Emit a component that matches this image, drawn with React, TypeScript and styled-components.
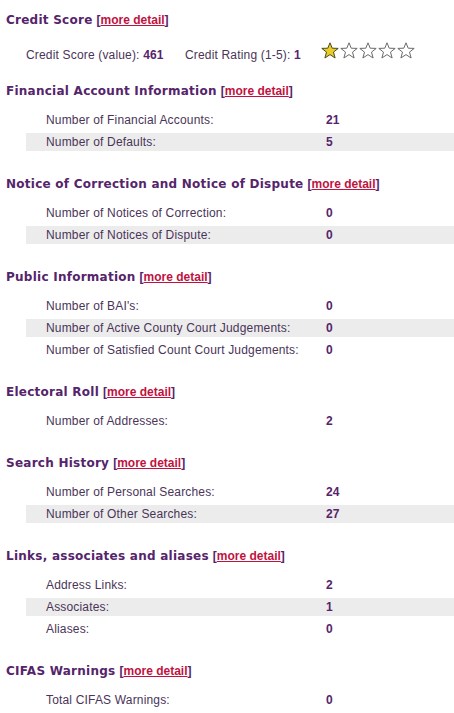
import React from "react";
import styled, { createGlobalStyle } from "styled-components";

const Global = createGlobalStyle`
  html, body { margin: 0; padding: 0; background: #ffffff; }
  body { font-family: "Liberation Sans", Arial, sans-serif; }
`;

const Page = styled.div`
  width: 454px;
  padding: 10px 0 0 0;
  box-sizing: border-box;
`;

const Section = styled.section<{ $gap?: number }>`
  display: flex;
  flex-direction: column;
  padding-bottom: ${(p) => (p.$gap ?? 23)}px;
`;

const Heading = styled.h2`
  margin: 0;
  padding-left: 6px;
  height: 20px;
  line-height: 20px;
  font-family: "DejaVu Sans", Verdana, sans-serif;
  font-size: 12px;
  font-weight: bold;
  letter-spacing: 0.25px;
  color: #55246b;
  white-space: nowrap;
`;

const More = styled.span`
  font-family: "Liberation Sans", Arial, sans-serif;
  font-size: 12px;
  font-weight: bold;
  letter-spacing: 0;
  color: #55246b;
  margin-left: 4px;
`;

const MoreLink = styled.a`
  color: #c0123f;
  text-decoration: underline;
`;

const Rows = styled.div`
  display: flex;
  flex-direction: column;
  gap: 4px;
  margin: 10px 0 0 26px;
`;

const Row = styled.div<{ $shade: boolean }>`
  display: grid;
  grid-template-columns: 300px 1fr;
  height: 18px;
  line-height: 18px;
  background: ${(p) => (p.$shade ? "#ececec" : "transparent")};
  font-size: 12px;
`;

const Label = styled.span`
  padding-left: 20px;
  color: #4a3458;
  letter-spacing: 0.17px;
  white-space: nowrap;
`;

const Value = styled.span`
  font-weight: bold;
  color: #55246b;
`;

const ScoreRow = styled.div`
  display: flex;
  align-items: flex-start;
  height: 20px;
  margin: 13px 0 0 26px;
  font-size: 12px;
`;

const ScoreItem = styled.span<{ $w: number }>`
  width: ${(p) => p.$w}px;
  padding-top: 2px;
  line-height: 20px;
  color: #4a3458;
  letter-spacing: 0.17px;
  white-space: nowrap;
`;

const Stars = styled.div`
  display: flex;
  gap: 1px;
  margin-top: -1px;
`;

const Star = ({ filled }: { filled: boolean }) => (
  <svg width="18" height="17" viewBox="0 0 18 17">
    <polygon
      points="9,0.8 11.2,6.2 17.2,6.4 12.5,10.1 14.1,16 9,12.6 3.9,16 5.5,10.1 0.8,6.4 6.8,6.2"
      fill={filled ? "#e9cc25" : "#ffffff"}
      stroke={filled ? "#4a4a20" : "#6a6a6a"}
      strokeWidth="1"
      strokeLinejoin="miter"
    />
  </svg>
);

type Item = [string, string];
const sections: { title: string; rows: Item[] }[] = [
  {
    title: "Financial Account Information",
    rows: [
      ["Number of Financial Accounts:", "21"],
      ["Number of Defaults:", "5"],
    ],
  },
  {
    title: "Notice of Correction and Notice of Dispute",
    rows: [
      ["Number of Notices of Correction:", "0"],
      ["Number of Notices of Dispute:", "0"],
    ],
  },
  {
    title: "Public Information",
    rows: [
      ["Number of BAI's:", "0"],
      ["Number of Active County Court Judgements:", "0"],
      ["Number of Satisfied Count Court Judgements:", "0"],
    ],
  },
  {
    title: "Electoral Roll",
    rows: [["Number of Addresses:", "2"]],
  },
  {
    title: "Search History",
    rows: [
      ["Number of Personal Searches:", "24"],
      ["Number of Other Searches:", "27"],
    ],
  },
  {
    title: "Links, associates and aliases",
    rows: [
      ["Address Links:", "2"],
      ["Associates:", "1"],
      ["Aliases:", "0"],
    ],
  },
  {
    title: "CIFAS Warnings",
    rows: [["Total CIFAS Warnings:", "0"]],
  },
];

const Title = ({ text }: { text: string }) => (
  <Heading>
    {text}
    <More>
      [<MoreLink href="#">more detail</MoreLink>]
    </More>
  </Heading>
);

export default function App() {
  return (
    <Page>
      <Global />
      <Section $gap={18}>
        <Title text="Credit Score" />
        <ScoreRow>
          <ScoreItem $w={159}>
            Credit Score (value): <Value>461</Value>
          </ScoreItem>
          <ScoreItem $w={136}>
            Credit Rating (1-5): <Value>1</Value>
          </ScoreItem>
          <Stars>
            {[0, 1, 2, 3, 4].map((i) => (
              <Star key={i} filled={i < 1} />
            ))}
          </Stars>
        </ScoreRow>
      </Section>
      {sections.map((s) => (
        <Section key={s.title}>
          <Title text={s.title} />
          <Rows>
            {s.rows.map(([l, v], i) => (
              <Row key={l} $shade={i % 2 === 1}>
                <Label>{l}</Label>
                <Value>{v}</Value>
              </Row>
            ))}
          </Rows>
        </Section>
      ))}
    </Page>
  );
}
